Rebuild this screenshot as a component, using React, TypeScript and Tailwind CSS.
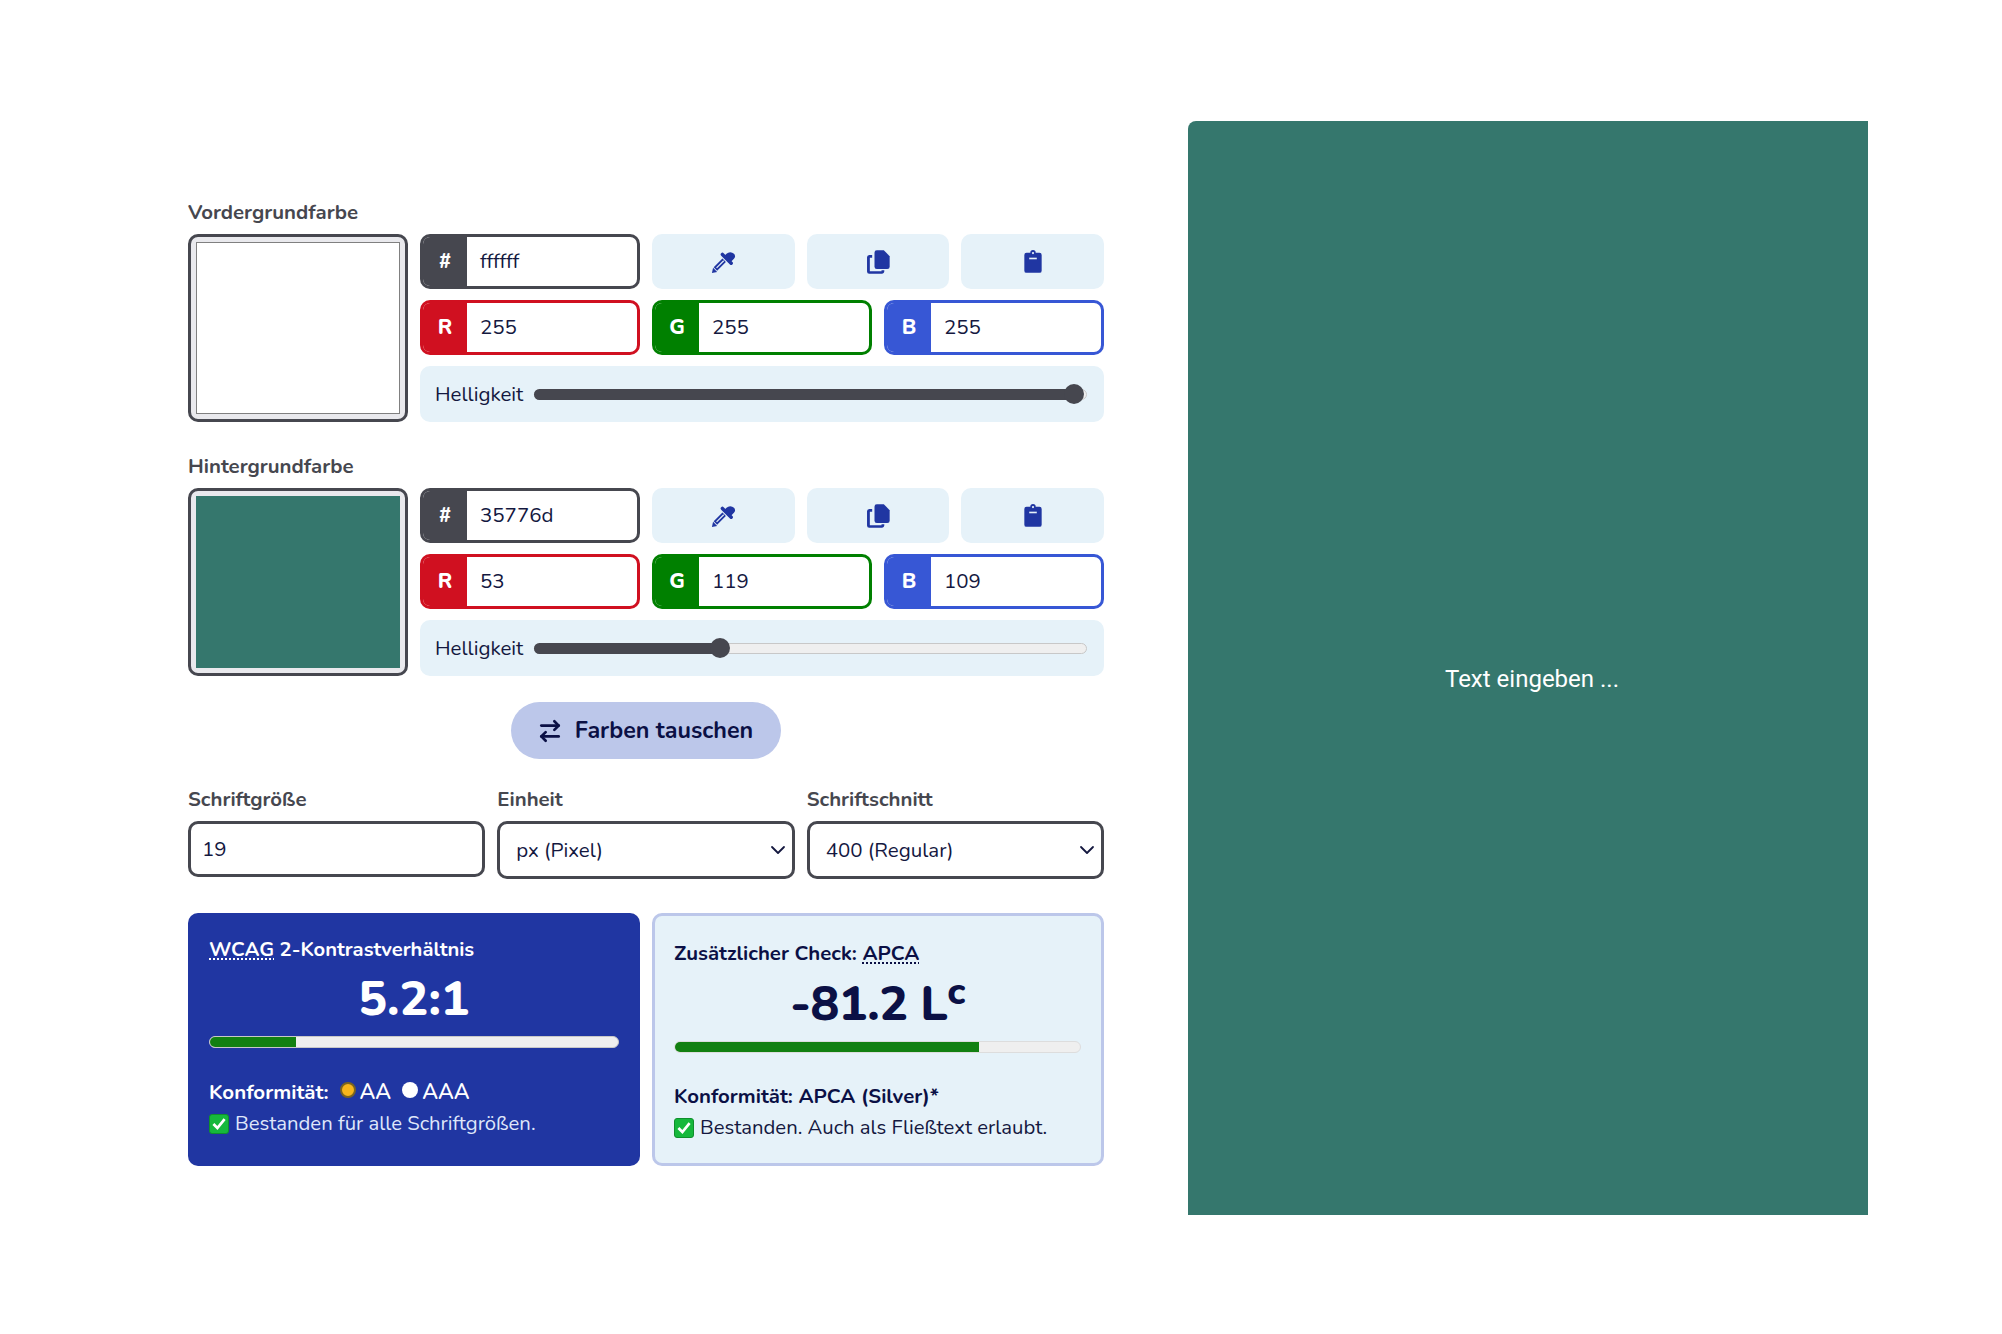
import React from 'react';
import { ArrowRightLeft, ChevronDown } from 'lucide-react';

const Dropper = () => (
  <svg viewBox="0 0 24 24" className="w-[28px] h-[28px]" fill="none">
    <path d="M13.500 6.500l1.500-1.500a4.500 4.500 0 0 1 6.400 0a3.200 3.200 0 0 1 0 4.300l-3.400 3.400z" fill="#2036a2" />
    <path d="M11.500 5.500l7.500 7.500" stroke="#2036a2" strokeWidth="3" strokeLinecap="round" />
    <path d="M13 10.500L5.500 18" stroke="#2036a2" strokeWidth="4.200" />
    <path d="M12.600 10.900L6.500 17" stroke="#e6f2f9" strokeWidth="1" />
    <path d="M2.500 21.500l1-4.500l3.500 3.500z" fill="#2036a2" />
  </svg>
);

const Copy = () => (
  <svg viewBox="0 0 24 24" className="w-[28px] h-[28px]" fill="#2036a2">
    <path d="M11 2h6l5 5v9a2 2 0 0 1-2 2h-9a2 2 0 0 1-2-2V4a2 2 0 0 1 2-2z" />
    <path d="M7 6v2.400H5V20h10v-1h2.400v1.200A1.900 1.900 0 0 1 15.500 22H4.500a1.900 1.900 0 0 1-1.900-1.900V8A2 2 0 0 1 4.500 6z" />
  </svg>
);

const Paste = () => (
  <svg viewBox="0 0 24 24" className="w-[26px] h-[26px]" fill="#2036a2">
    <path d="M9.500 3.500a2.500 2.500 0 0 1 5 0H18a2 2 0 0 1 2 2V20a2 2 0 0 1-2 2H6a2 2 0 0 1-2-2V5.500a2 2 0 0 1 2-2z" />
    <path d="M8.500 8h7v1.500h-7z" fill="#e6f2f9" />
    <circle cx="12" cy="3.800" r="1" fill="#e6f2f9" />
  </svg>
);

const Field = ({ tag, value, border, bg }: { tag: string; value: string; border: string; bg: string }) => (
  <div className={`flex h-[55px] rounded-[10px] border-[3px] overflow-hidden bg-white ${border}`}>
    <div className={`w-[44px] shrink-0 flex items-center justify-center text-white font-extrabold text-[21px] ${bg}`}>{tag}</div>
    <div className="flex-1 flex items-center pl-[13px] text-[20.500px] text-[#14183f]">{value}</div>
  </div>
);

const Slider = ({ fill }: { fill: number }) => (
  <div className="relative flex-1 h-[11px] rounded-full bg-[#efefef] border border-[#c8c8c8]">
    <div
      className="absolute -left-px -top-px -bottom-px rounded-l-full bg-[#46474f]"
      style={{ width: `calc(10px + (100% - 22px) * ${fill / 100})` }}
    />
    <div
      className="absolute top-1/2 -translate-y-1/2 -translate-x-1/2 w-[20px] h-[20px] rounded-full bg-[#46474f]"
      style={{ left: `calc(10px + (100% - 22px) * ${fill / 100})` }}
    />
  </div>
);

const ColorBlock = ({ label, hex, r, g, b, swatch, fill }: { label: string; hex: string; r: string; g: string; b: string; swatch: string; fill: number }) => (
  <section className="flex flex-col">
    <div className="text-[20.400px] font-bold text-[#46474f] leading-[28px] mb-[8px]">{label}</div>
    <div className="grid grid-cols-[220px_1fr] gap-x-[12px]">
      <div className="rounded-[10px] border-[3px] border-[#46474f] bg-[#e9e9ed] p-[5px]">
        <div className={`h-full border-[1.500px] ${swatch}`} />
      </div>
      <div className="flex flex-col gap-[11px]">
        <div className="grid grid-cols-[220px_1fr] gap-[12px]">
          <Field tag="#" value={hex} border="border-[#46474f]" bg="bg-[#46474f]" />
          <div className="grid grid-cols-3 gap-[12px]">
            <button className="h-[55px] rounded-[10px] bg-[#e6f2f9] flex items-center justify-center"><Dropper /></button>
            <button className="h-[55px] rounded-[10px] bg-[#e6f2f9] flex items-center justify-center"><Copy /></button>
            <button className="h-[55px] rounded-[10px] bg-[#e6f2f9] flex items-center justify-center"><Paste /></button>
          </div>
        </div>
        <div className="grid grid-cols-3 gap-[12px]">
          <Field tag="R" value={r} border="border-[#d01020]" bg="bg-[#d01020]" />
          <Field tag="G" value={g} border="border-[#008000]" bg="bg-[#008000]" />
          <Field tag="B" value={b} border="border-[#3757d5]" bg="bg-[#3757d5]" />
        </div>
        <div className="h-[56px] rounded-[10px] bg-[#e6f2f9] flex items-center pl-[15px] pr-[17px] gap-[11px]">
          <span className="text-[20.500px] text-[#14183f]">Helligkeit</span>
          <Slider fill={fill} />
        </div>
      </div>
    </div>
  </section>
);

const Check = () => (
  <span className="inline-flex w-[20px] h-[20px] rounded-[3px] bg-[#16b83c] border border-[#0f8f2c] items-center justify-center mr-[6px] align-[-2px]">
    <svg viewBox="0 0 20 20" className="w-[16px] h-[16px]"><path d="M3 10l5 5 9-11" fill="none" stroke="#fff" strokeWidth="3.400" /></svg>
  </span>
);

const Bar = ({ pct, track }: { pct: number; track: string }) => (
  <div className={`h-[12px] rounded-full bg-[#efefef] overflow-hidden border ${track}`}>
    <div className="h-full bg-[#128012]" style={{ width: `${pct}%` }} />
  </div>
);

export default function App() {
  return (
    <div className="w-[2002px] h-[1334px] bg-white flex items-start pt-[121px] pl-[188px] font-['Nunito','Noto_Sans',sans-serif]">
      <div className="w-[916px] flex flex-col pt-[77px]">
        <ColorBlock label="Vordergrundfarbe" hex="ffffff" r="255" g="255" b="255" swatch="bg-white border-[#808080]" fill={100} />
        <div className="h-[30px]" />
        <ColorBlock label="Hintergrundfarbe" hex="35776d" r="53" g="119" b="109" swatch="bg-[#35776d] border-[#35776d]" fill={33} />

        <div className="flex justify-center mt-[26px]">
          <button className="h-[57px] w-[270px] rounded-full bg-[#bcc7ea] flex items-center justify-center gap-[12px] pr-[2px] text-[23.300px] font-bold text-[#0b1045]">
            <ArrowRightLeft size={26} strokeWidth={2.500} />
            Farben tauschen
          </button>
        </div>

        <div className="grid grid-cols-3 gap-[12px] mt-[26px]">
          <div>
            <div className="text-[20.400px] font-bold text-[#46474f] leading-[28px] mb-[8px]">Schriftgröße</div>
            <div className="h-[56px] rounded-[10px] border-[3px] border-[#46474f] flex items-center pl-[11px] text-[20.500px] text-[#14183f]">19</div>
          </div>
          <div>
            <div className="text-[20.400px] font-bold text-[#46474f] leading-[28px] mb-[8px]">Einheit</div>
            <div className="h-[58px] rounded-[10px] border-[3px] border-[#46474f] flex items-center justify-between pl-[16px] pr-[2px] text-[20.500px] text-[#14183f]">px (Pixel)<ChevronDown size={24} strokeWidth={1.800} /></div>
          </div>
          <div>
            <div className="text-[20.400px] font-bold text-[#46474f] leading-[28px] mb-[8px]">Schriftschnitt</div>
            <div className="h-[58px] rounded-[10px] border-[3px] border-[#46474f] flex items-center justify-between pl-[16px] pr-[2px] text-[20.500px] text-[#14183f]">400 (Regular)<ChevronDown size={24} strokeWidth={1.800} /></div>
          </div>
        </div>

        <div className="grid grid-cols-2 gap-[12px] mt-[34px] h-[253px]">
          <div className="rounded-[10px] bg-[#2036a2] text-white pt-[23px] px-[21px]">
            <div className="text-[20.200px] font-bold leading-[28px]"><span className="underline decoration-dotted">WCAG</span> 2-Kontrastverhältnis</div>
            <div className="text-center text-[48px] font-extrabold leading-[60px] mt-[5px]">5.2:1</div>
            <div className="mt-[7px]"><Bar pct={21} track="border-[#c8c8c8]" /></div>
            <div className="flex items-center text-[20.500px] font-bold mt-[29px] leading-[30px]">
              Konformität:
              <span className="w-[16px] h-[16px] rounded-full bg-[#f7b61c] border-2 border-[#7a6420] ml-[11px] mr-[4px] -translate-y-[2px]" />
              <span className="font-semibold text-[21.500px]">AA</span>
              <span className="w-[16px] h-[16px] rounded-full bg-white ml-[11px] mr-[4px] -translate-y-[2px]" />
              <span className="font-semibold text-[21.500px]">AAA</span>
            </div>
            <div className="text-[20.300px] text-[#dfe6fa] leading-[30px] mt-[1px]"><Check />Bestanden für alle Schriftgrößen.</div>
          </div>
          <div className="rounded-[10px] bg-[#e6f2f9] border-[3px] border-[#bcc7ea] text-[#0b1045] pt-[23px] pl-[19px] pr-[20px]">
            <div className="text-[20.400px] font-bold leading-[28px]">Zusätzlicher Check: <span className="underline decoration-dotted">APCA</span></div>
            <div className="text-center text-[48px] font-extrabold leading-[60px] mt-[7px] tracking-[-0.500px]">-81.2 L<span className="text-[38px] align-[16px] leading-[0]">c</span></div>
            <div className="mt-[7px]"><Bar pct={75} track="border-[#dddddd]" /></div>
            <div className="text-[20.400px] font-bold mt-[28px] leading-[30px]">Konformität: APCA (Silver)*</div>
            <div className="text-[20.300px] text-[#14183f] leading-[30px] mt-[1px]"><Check />Bestanden. Auch als Fließtext erlaubt.</div>
          </div>
        </div>
      </div>
      <div className="ml-[84px] w-[680px] h-[1094px] bg-[#35776d] rounded-tl-[8px] flex items-center justify-center pl-[8px] pt-[21px]">
        <span className="font-['Roboto',sans-serif] text-white text-[24px]">Text eingeben ...</span>
      </div>
    </div>
  );
}
